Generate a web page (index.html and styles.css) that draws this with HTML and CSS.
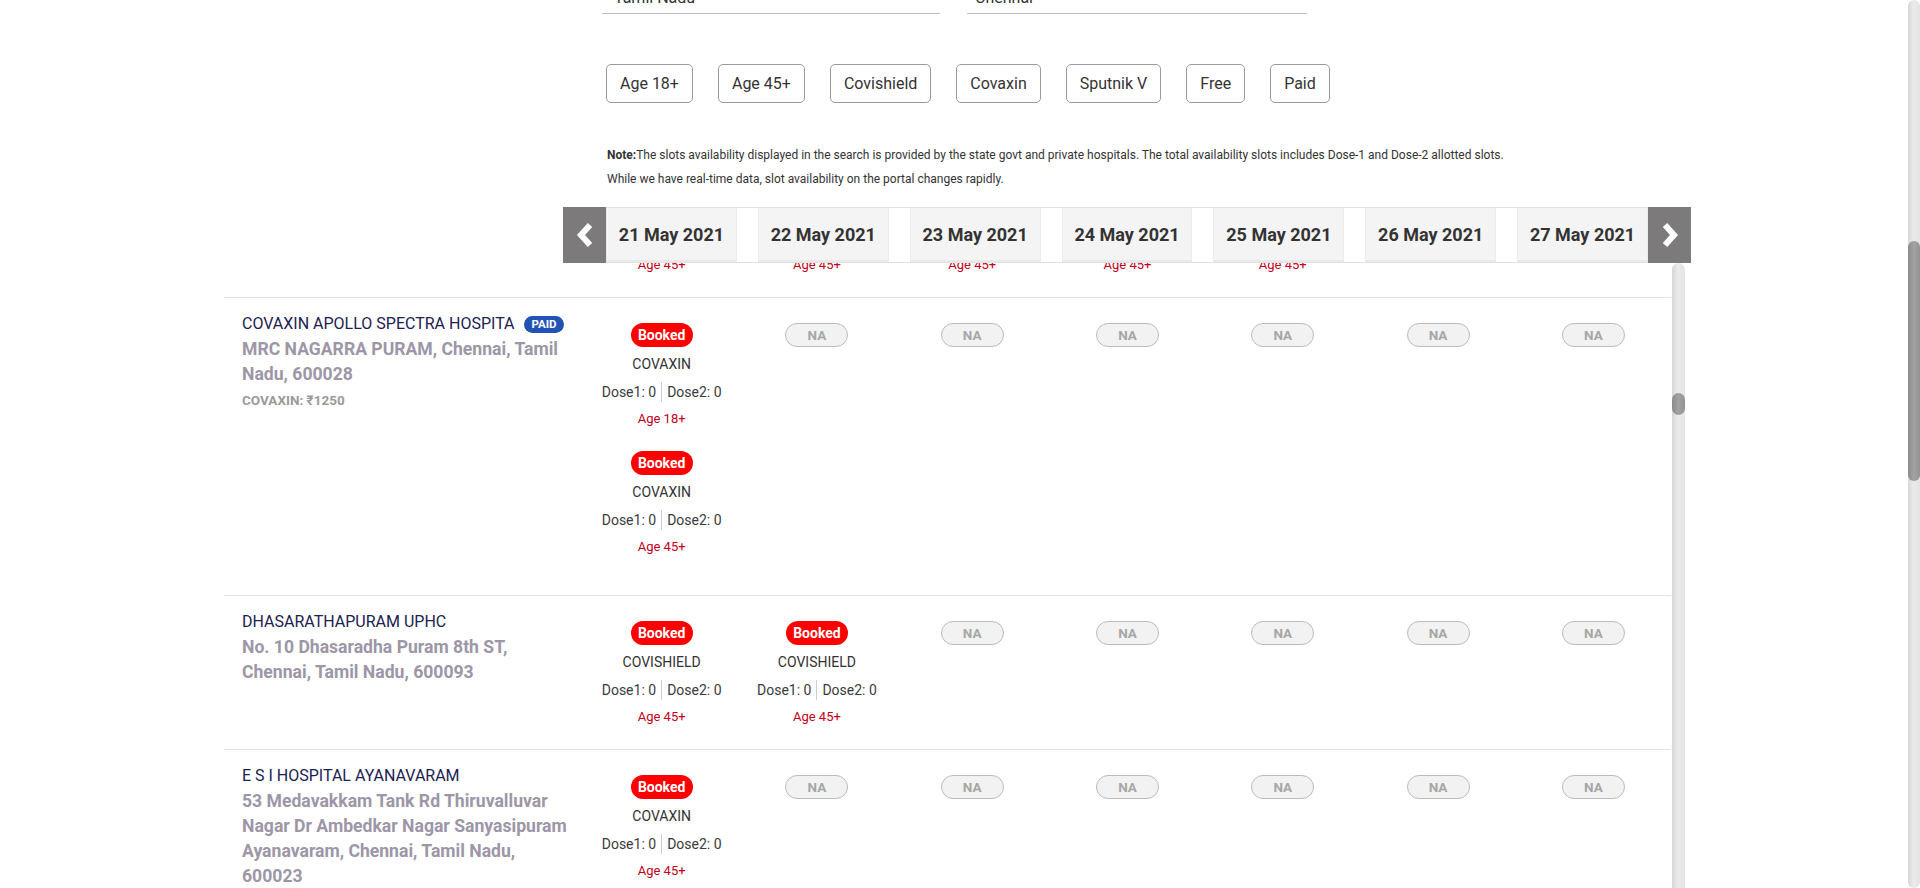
FILE: index.html
```html
<!DOCTYPE html>
<html lang="en">
<head>
<meta charset="utf-8">
<title>Vaccination slots</title>
<link rel="stylesheet" href="styles.css">
</head>
<body>
<div class="page">
  <div class="search">
    <div class="field field--state">Tamil Nadu</div>
    <div class="field field--district">Chennai</div>
  </div>

  <div class="filters">
    <button class="filter">Age 18+</button>
    <button class="filter">Age 45+</button>
    <button class="filter">Covishield</button>
    <button class="filter">Covaxin</button>
    <button class="filter">Sputnik V</button>
    <button class="filter">Free</button>
    <button class="filter">Paid</button>
  </div>

  <div class="note">
    <p><b>Note:</b>The slots availability displayed in the search is provided by the state govt and private hospitals. The total availability slots includes Dose-1 and Dose-2 allotted slots.</p>
    <p>While we have real-time data, slot availability on the portal changes rapidly.</p>
  </div>

  <div class="date-bar">
    <div class="date-arrow">
      <svg width="20" height="26" viewBox="0 0 20 26"><polyline points="15,3 6,13 15,23" fill="none" stroke="#fff" stroke-width="6" stroke-linecap="butt" stroke-linejoin="miter"/></svg>
    </div>
    <div class="date-track">
      <div class="date-tab">21 May 2021</div>
      <div class="date-tab">22 May 2021</div>
      <div class="date-tab">23 May 2021</div>
      <div class="date-tab">24 May 2021</div>
      <div class="date-tab">25 May 2021</div>
      <div class="date-tab">26 May 2021</div>
      <div class="date-tab">27 May 2021</div>
    </div>
    <div class="date-arrow">
      <svg width="20" height="26" viewBox="0 0 20 26"><polyline points="5,3 14,13 5,23" fill="none" stroke="#fff" stroke-width="6" stroke-linecap="butt" stroke-linejoin="miter"/></svg>
    </div>
  </div>

  <div class="results">
    <div class="table">
      <div class="tail">
        <div></div>
        <div class="tail-cell"><span class="age">Age 45+</span></div>
        <div class="tail-cell"><span class="age">Age 45+</span></div>
        <div class="tail-cell"><span class="age">Age 45+</span></div>
        <div class="tail-cell"><span class="age">Age 45+</span></div>
        <div class="tail-cell"><span class="age">Age 45+</span></div>
        <div></div>
        <div></div>
      </div>

      <div class="row row--multi">
        <div class="info">
          <div class="hname">COVAXIN APOLLO SPECTRA HOSPITA <span class="paid">PAID</span></div>
          <div class="haddr">MRC NAGARRA PURAM, Chennai, Tamil Nadu, 600028</div>
          <div class="hprice">COVAXIN: ₹1250</div>
        </div>
        <div class="slot">
          <div class="group">
            <span class="badge badge--booked">Booked</span>
            <div class="vaccine">COVAXIN</div>
            <div class="dose"><span>Dose1: 0</span><span>Dose2: 0</span></div>
            <div class="age">Age 18+</div>
          </div>
          <div class="group">
            <span class="badge badge--booked">Booked</span>
            <div class="vaccine">COVAXIN</div>
            <div class="dose"><span>Dose1: 0</span><span>Dose2: 0</span></div>
            <div class="age">Age 45+</div>
          </div>
        </div>
        <div class="slot"><span class="badge badge--na">NA</span></div>
        <div class="slot"><span class="badge badge--na">NA</span></div>
        <div class="slot"><span class="badge badge--na">NA</span></div>
        <div class="slot"><span class="badge badge--na">NA</span></div>
        <div class="slot"><span class="badge badge--na">NA</span></div>
        <div class="slot"><span class="badge badge--na">NA</span></div>
      </div>

      <div class="row">
        <div class="info">
          <div class="hname">DHASARATHAPURAM UPHC</div>
          <div class="haddr">No. 10 Dhasaradha Puram 8th ST, Chennai, Tamil Nadu, 600093</div>
        </div>
        <div class="slot">
          <div class="group">
            <span class="badge badge--booked">Booked</span>
            <div class="vaccine">COVISHIELD</div>
            <div class="dose"><span>Dose1: 0</span><span>Dose2: 0</span></div>
            <div class="age">Age 45+</div>
          </div>
        </div>
        <div class="slot">
          <div class="group">
            <span class="badge badge--booked">Booked</span>
            <div class="vaccine">COVISHIELD</div>
            <div class="dose"><span>Dose1: 0</span><span>Dose2: 0</span></div>
            <div class="age">Age 45+</div>
          </div>
        </div>
        <div class="slot"><span class="badge badge--na">NA</span></div>
        <div class="slot"><span class="badge badge--na">NA</span></div>
        <div class="slot"><span class="badge badge--na">NA</span></div>
        <div class="slot"><span class="badge badge--na">NA</span></div>
        <div class="slot"><span class="badge badge--na">NA</span></div>
      </div>

      <div class="row">
        <div class="info">
          <div class="hname">E S I HOSPITAL AYANAVARAM</div>
          <div class="haddr">53 Medavakkam Tank Rd Thiruvalluvar Nagar Dr Ambedkar Nagar Sanyasipuram Ayanavaram, Chennai, Tamil Nadu, 600023</div>
        </div>
        <div class="slot">
          <div class="group">
            <span class="badge badge--booked">Booked</span>
            <div class="vaccine">COVAXIN</div>
            <div class="dose"><span>Dose1: 0</span><span>Dose2: 0</span></div>
            <div class="age">Age 45+</div>
          </div>
        </div>
        <div class="slot"><span class="badge badge--na">NA</span></div>
        <div class="slot"><span class="badge badge--na">NA</span></div>
        <div class="slot"><span class="badge badge--na">NA</span></div>
        <div class="slot"><span class="badge badge--na">NA</span></div>
        <div class="slot"><span class="badge badge--na">NA</span></div>
        <div class="slot"><span class="badge badge--na">NA</span></div>
      </div>
    </div>
    <div class="inner-scroll"><div class="inner-thumb"></div></div>
  </div>
</div>
<div class="page-scroll"><div class="page-thumb"></div></div>
</body>
</html>
```

FILE: styles.css
```css
* { box-sizing: border-box; }

html, body {
  margin: 0;
  height: 100%;
}

body {
  display: flex;
  overflow: hidden;
  background: #fff;
  color: #333;
  font-family: Roboto, "Liberation Sans", Arial, sans-serif;
}

.page {
  flex: 1;
  min-width: 0;
  height: 888px;
  overflow: hidden;
  display: flex;
  flex-direction: column;
}

/* search fields (scrolled partly off the top) */
.search {
  display: flex;
  gap: 27px;
  margin: -14px 0 0 602px;
  flex: none;
}

.field {
  border-bottom: 1px solid #bdbdbd;
  font-size: 16px;
  line-height: 24px;
  padding: 0 10px 3px 12px;
  color: #333;
}

.field--state { width: 338px; }
.field--district { width: 340px; padding-left: 8px; }

/* filter buttons */
.filters {
  display: flex;
  gap: 25px;
  margin: 50px 0 0 606px;
  flex: none;
}

.filter {
  height: 39px;
  padding: 0 13px;
  border: 1px solid #9a9a9a;
  border-radius: 5px;
  background: #fff;
  color: #333;
  font-family: inherit;
  font-size: 16px;
  line-height: 37px;
}

/* note */
.note {
  margin: 40px 0 0 607px;
  font-size: 12px;
  line-height: 24px;
  color: #333;
  flex: none;
}

.note p { margin: 0; }

/* date carousel */
.date-bar {
  margin: 16px 0 0 563px;
  width: 1128px;
  height: 56px;
  display: flex;
  flex: none;
}

.date-arrow {
  width: 43px;
  flex: none;
  background: #7c7a7a;
  display: flex;
  align-items: center;
  justify-content: center;
}

.date-track {
  flex: 1;
  display: flex;
  gap: 21px;
  border-top: 1px solid #e2e2e2;
  border-bottom: 1px solid #e2e2e2;
}

.date-tab {
  flex: 1;
  background: #f4f4f4;
  border-left: 1px solid #ececec;
  border-right: 1px solid #ececec;
  border-bottom: 2px solid #e9e9e9;
  display: flex;
  align-items: center;
  justify-content: center;
  font-size: 18px;
  font-weight: 700;
  color: #333;
}

/* results table */
.results {
  flex: 1;
  min-height: 0;
  display: flex;
  margin-left: 224px;
  overflow: hidden;
}

.table {
  width: 1447px;
  flex: none;
}

.tail,
.row {
  display: grid;
  grid-template-columns: 360px repeat(7, 1fr);
}

.tail {
  height: 34px;
  overflow: hidden;
}

.tail-cell {
  text-align: center;
  margin-top: -9px;
}

.tail-cell .age { display: inline-block; margin-top: 0; }

.row {
  border-top: 1px solid #e4e4e4;
}

.row--multi { padding-bottom: 16px; }

.info {
  padding: 13px 8px 0 18px;
}

.hname {
  font-size: 16px;
  line-height: 26px;
  color: #1b2150;
}

.paid {
  display: inline-block;
  vertical-align: 1px;
  margin-left: 6px;
  padding: 2px 7px;
  border-radius: 9px;
  background: #2352b5;
  color: #fff;
  font-size: 11.5px;
  font-weight: 700;
  line-height: 13px;
}

.haddr {
  font-size: 17.6px;
  font-weight: 700;
  line-height: 25px;
  color: #9d96a7;
}

.hprice {
  font-size: 13.5px;
  font-weight: 700;
  line-height: 27px;
  color: #9a9a9a;
}

.slot {
  padding-top: 25px;
  display: flex;
  flex-direction: column;
  align-items: center;
}

.group {
  display: flex;
  flex-direction: column;
  align-items: center;
  margin-bottom: 22px;
}

.badge {
  min-width: 62px;
  height: 24px;
  padding: 0 7px;
  border-radius: 12px;
  text-align: center;
  font-weight: 700;
}

.badge--booked {
  background: #ff0000;
  color: #fff;
  font-size: 14px;
  line-height: 24px;
}

.badge--na {
  min-width: 63px;
  background: #f2f2f2;
  border: 1px solid #bcbcbc;
  color: #a6a6a6;
  font-size: 13.5px;
  line-height: 22px;
}

.vaccine {
  margin-top: 7px;
  font-size: 14px;
  line-height: 20px;
  color: #333;
}

.dose {
  margin-top: 8px;
  display: flex;
  font-size: 14px;
  line-height: 20px;
  color: #3b3b3b;
}

.dose span + span {
  border-left: 1px solid #cfcfcf;
  margin-left: 5px;
  padding-left: 5px;
}

.age {
  margin-top: 7px;
  font-size: 13px;
  line-height: 20px;
  color: #c4001a;
}

/* scrollbars */
.inner-scroll {
  width: 13px;
  flex: none;
  margin-left: 1px;
  padding-top: 130px;
  border-radius: 7px 7px 0 0;
  background: linear-gradient(to right, #d6d6d6, #ebebeb 45%, #e3e3e3);
}

.inner-thumb {
  height: 22px;
  border-radius: 7px;
  background: linear-gradient(to right, #8c8c8c, #a2a2a2 50%, #939393);
}

.page-scroll {
  width: 12px;
  flex: none;
  height: 888px;
  padding-top: 241px;
  border-radius: 6px;
  background: linear-gradient(to right, #d6d6d6, #ebebeb 45%, #e3e3e3);
}

.page-thumb {
  height: 240px;
  border-radius: 6px;
  background: linear-gradient(to right, #8c8c8c, #a2a2a2 50%, #939393);
}
```
